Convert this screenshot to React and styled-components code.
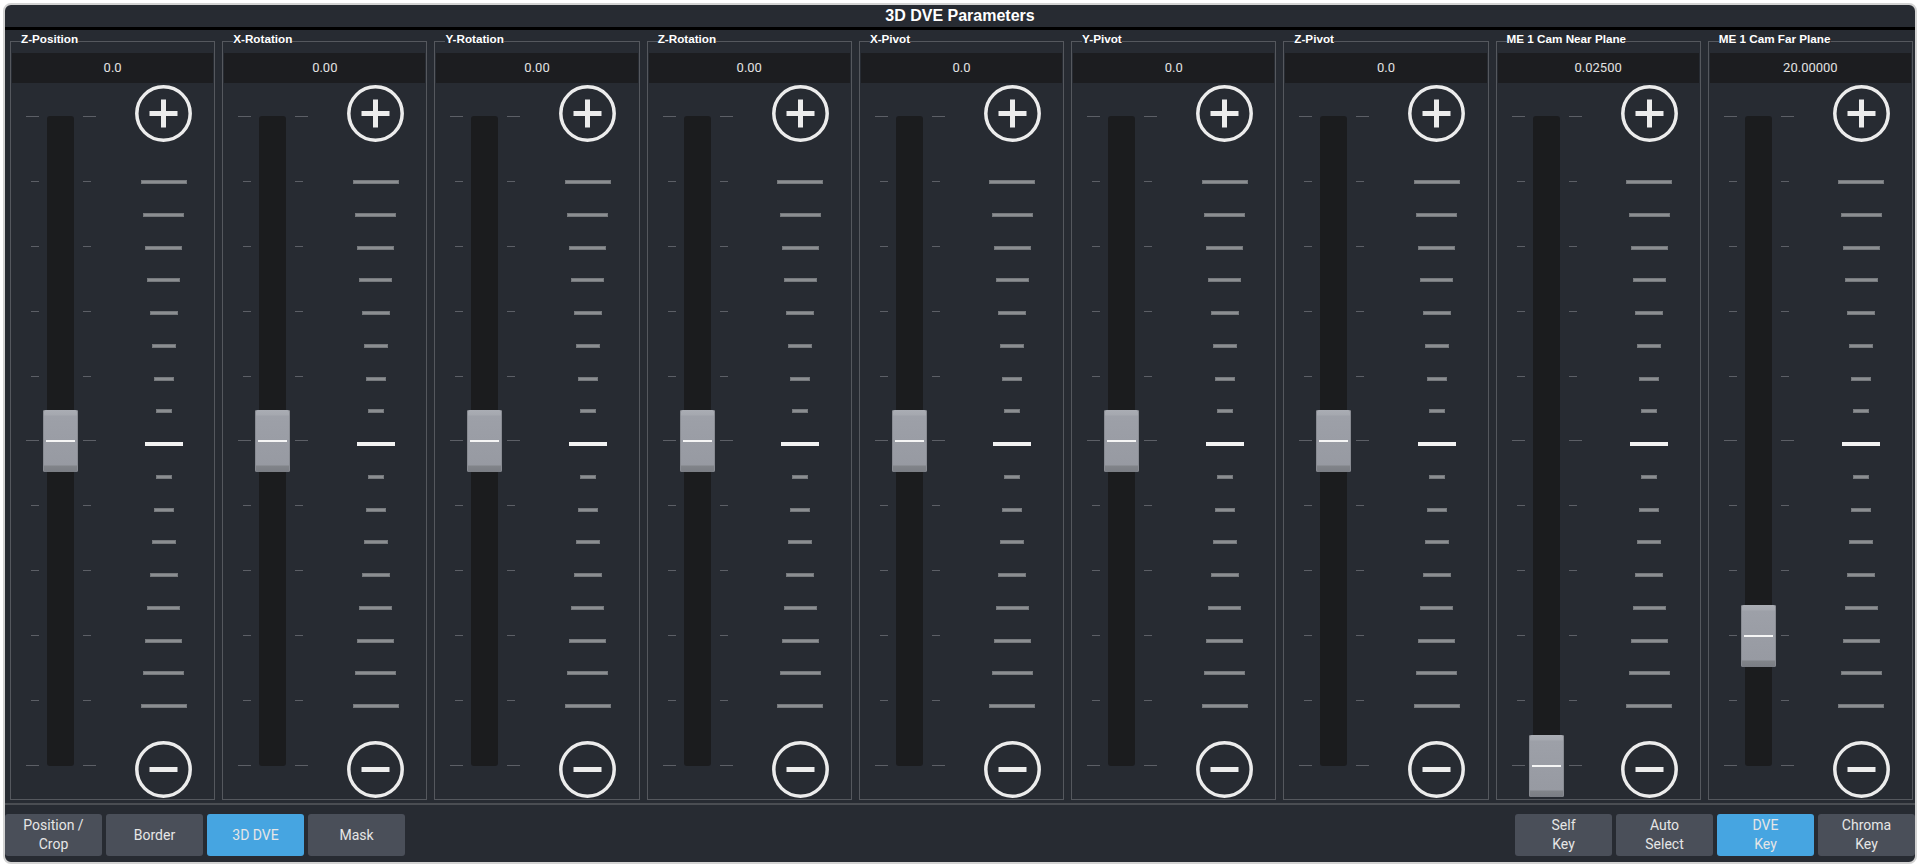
import React from "react";
import styled, { createGlobalStyle } from "styled-components";

const GlobalStyle = createGlobalStyle`
  html, body {
    margin: 0;
    padding: 0;
    background: #ffffff;
  }
  body {
    font-family: "Liberation Sans", Arial, sans-serif;
  }
`;

const Window = styled.div`
  margin: 3px;
  height: 861px;
  box-sizing: border-box;
  border: 2px solid #d3d3d3;
  border-radius: 8px;
  background: #272b32;
  overflow: hidden;
  display: flex;
  flex-direction: column;
`;

const TitleBar = styled.div`
  height: 22px;
  line-height: 22px;
  border-bottom: 3px solid #000;
  text-align: center;
  color: #fff;
  font-family: "Liberation Sans", Arial, sans-serif;
  font-weight: 700;
  font-size: 16px;
`;

const Columns = styled.div`
  display: grid;
  grid-template-columns: repeat(9, 1fr);
  column-gap: 7px;
  padding: 3px 2px 0 5px;
`;

const Group = styled.fieldset`
  margin: 0;
  padding: 0 1px;
  min-width: 0;
  border: 1px solid #55585e;
`;

const Legend = styled.legend`
  margin-left: 9px;
  padding: 0 0 4px;
  line-height: 12px;
  font-family: "Liberation Sans", Arial, sans-serif;
  font-weight: 700;
  font-size: 11.7px;
  color: #fff;
  white-space: nowrap;
`;

const ValueField = styled.div`
  margin-top: 4px;
  height: 30px;
  line-height: 30px;
  background: #1c1d20;
  color: #e2e2e2;
  text-align: center;
  font-family: Roboto, "Liberation Sans", sans-serif;
  font-size: 13px;
`;

const Body = styled.div`
  display: flex;
  height: 716px;
`;

const SliderArea = styled.div`
  display: flex;
  margin-left: 14px;
  padding-top: 33px;
  height: 650px;
`;

const TickColumn = styled.div`
  display: flex;
  flex-direction: column;
  justify-content: space-between;
  align-items: ${(p) => (p.$side === "left" ? "flex-end" : "flex-start")};
  width: 13px;
  margin: ${(p) => (p.$side === "left" ? "0 8px 0 0" : "0 0 0 9px")};
`;

const Tick = styled.div`
  height: 1px;
  width: ${(p) => (p.$long ? 13 : 8)}px;
  background: #5c5f66;
`;

const Track = styled.div`
  position: relative;
  width: 27px;
  height: 650px;
  border-radius: 3px;
  background: #1b1c1e;
`;

const Knob = styled.div`
  position: absolute;
  left: -4px;
  width: 35px;
  height: 62px;
  border-radius: 2px;
  background: linear-gradient(
    to bottom,
    #aaadb4 0,
    #a5a8af 5px,
    #9da0a8 6px,
    #979aa2 calc(100% - 7px),
    #818489 calc(100% - 6px),
    #7a7d84 100%
  );
  box-shadow: inset 1px 0 0 #888b92, inset -1px 0 0 #888b92;

  &::after {
    content: "";
    position: absolute;
    left: 3px;
    right: 3px;
    top: 30px;
    height: 2px;
    background: #f5f5f5;
  }
`;

const ButtonColumn = styled.div`
  display: flex;
  flex-direction: column;
  align-items: center;
  width: 57px;
  margin-left: 39px;
  padding-top: 2px;
`;

const RoundIcon = styled.svg`
  display: block;
  width: 57px;
  height: 57px;
  flex: none;
`;

const Bars = styled.div`
  display: flex;
  flex-direction: column;
  justify-content: space-between;
  align-items: center;
  height: 528px;
  margin: 38px 0 33px;
`;

const Bar = styled.div`
  height: 4px;
  width: ${(p) => p.$w}px;
  background: ${(p) => (p.$center ? "#f2f2f2" : "#8b8e91")};
  box-shadow: ${(p) => (p.$center ? "none" : "inset 0 0 0 1px #76797d")};
`;

const Footer = styled.div`
  display: flex;
  justify-content: space-between;
  margin-top: 3px;
  border-top: 2px solid #4a4d52;
  padding: 9px 0 6px;
`;

const ButtonGroup = styled.div`
  display: flex;
  gap: 4px;
`;

const TabButton = styled.div`
  display: flex;
  align-items: center;
  justify-content: center;
  width: 97px;
  height: 42px;
  border-radius: 3px;
  background: ${(p) => (p.$active ? "#46a5e1" : "#4a4f59")};
  color: #e6e6e6;
  font-family: Roboto, "Liberation Sans", sans-serif;
  font-size: 14px;
  line-height: 19px;
  text-align: center;
  white-space: pre-line;
`;

const params = [
  { label: "Z-Position", value: "0.0", pos: 0.5 },
  { label: "X-Rotation", value: "0.00", pos: 0.5 },
  { label: "Y-Rotation", value: "0.00", pos: 0.5 },
  { label: "Z-Rotation", value: "0.00", pos: 0.5 },
  { label: "X-Pivot", value: "0.0", pos: 0.5 },
  { label: "Y-Pivot", value: "0.0", pos: 0.5 },
  { label: "Z-Pivot", value: "0.0", pos: 0.5 },
  { label: "ME 1 Cam Near Plane", value: "0.02500", pos: 1 },
  { label: "ME 1 Cam Far Plane", value: "20.00000", pos: 0.8 },
];

const barWidths = [46, 41, 37, 33, 28, 24, 20, 16, 38, 16, 20, 24, 28, 33, 37, 41, 46];
const ticks = Array.from({ length: 11 }, (_, i) => i % 5 === 0);

const leftTabs = ["Position /\nCrop", "Border", "3D DVE", "Mask"];
const rightTabs = ["Self\nKey", "Auto\nSelect", "DVE\nKey", "Chroma\nKey"];

const TRACK_H = 650;
const KNOB_H = 62;

const RoundButton = ({ plus }) => (
  <RoundIcon viewBox="0 0 57 57">
    <circle cx="28.5" cy="28.5" r="26.7" fill="none" stroke="#ececec" strokeWidth="3.5" />
    <rect x="14.5" y="26" width="28" height="5" fill="#ececec" />
    {plus && <rect x="26" y="14.5" width="5" height="28" fill="#ececec" />}
  </RoundIcon>
);

const Fader = ({ label, value, pos }) => (
  <Group>
    <Legend>{label}</Legend>
    <ValueField>{value}</ValueField>
    <Body>
      <SliderArea>
        <TickColumn $side="left">
          {ticks.map((long, i) => (
            <Tick key={i} $long={long} />
          ))}
        </TickColumn>
        <Track>
          <Knob style={{ top: pos * TRACK_H - KNOB_H / 2 }} />
        </Track>
        <TickColumn $side="right">
          {ticks.map((long, i) => (
            <Tick key={i} $long={long} />
          ))}
        </TickColumn>
      </SliderArea>
      <ButtonColumn>
        <RoundButton plus />
        <Bars>
          {barWidths.map((w, i) => (
            <Bar key={i} $w={w} $center={i === 8} />
          ))}
        </Bars>
        <RoundButton />
      </ButtonColumn>
    </Body>
  </Group>
);

export default function App() {
  return (
    <>
      <GlobalStyle />
      <Window>
        <TitleBar>3D DVE Parameters</TitleBar>
        <Columns>
          {params.map((p) => (
            <Fader key={p.label} {...p} />
          ))}
        </Columns>
        <Footer>
          <ButtonGroup>
            {leftTabs.map((t) => (
              <TabButton key={t} $active={t === "3D DVE"}>
                {t}
              </TabButton>
            ))}
          </ButtonGroup>
          <ButtonGroup>
            {rightTabs.map((t) => (
              <TabButton key={t} $active={t === "DVE\nKey"}>
                {t}
              </TabButton>
            ))}
          </ButtonGroup>
        </Footer>
      </Window>
    </>
  );
}
